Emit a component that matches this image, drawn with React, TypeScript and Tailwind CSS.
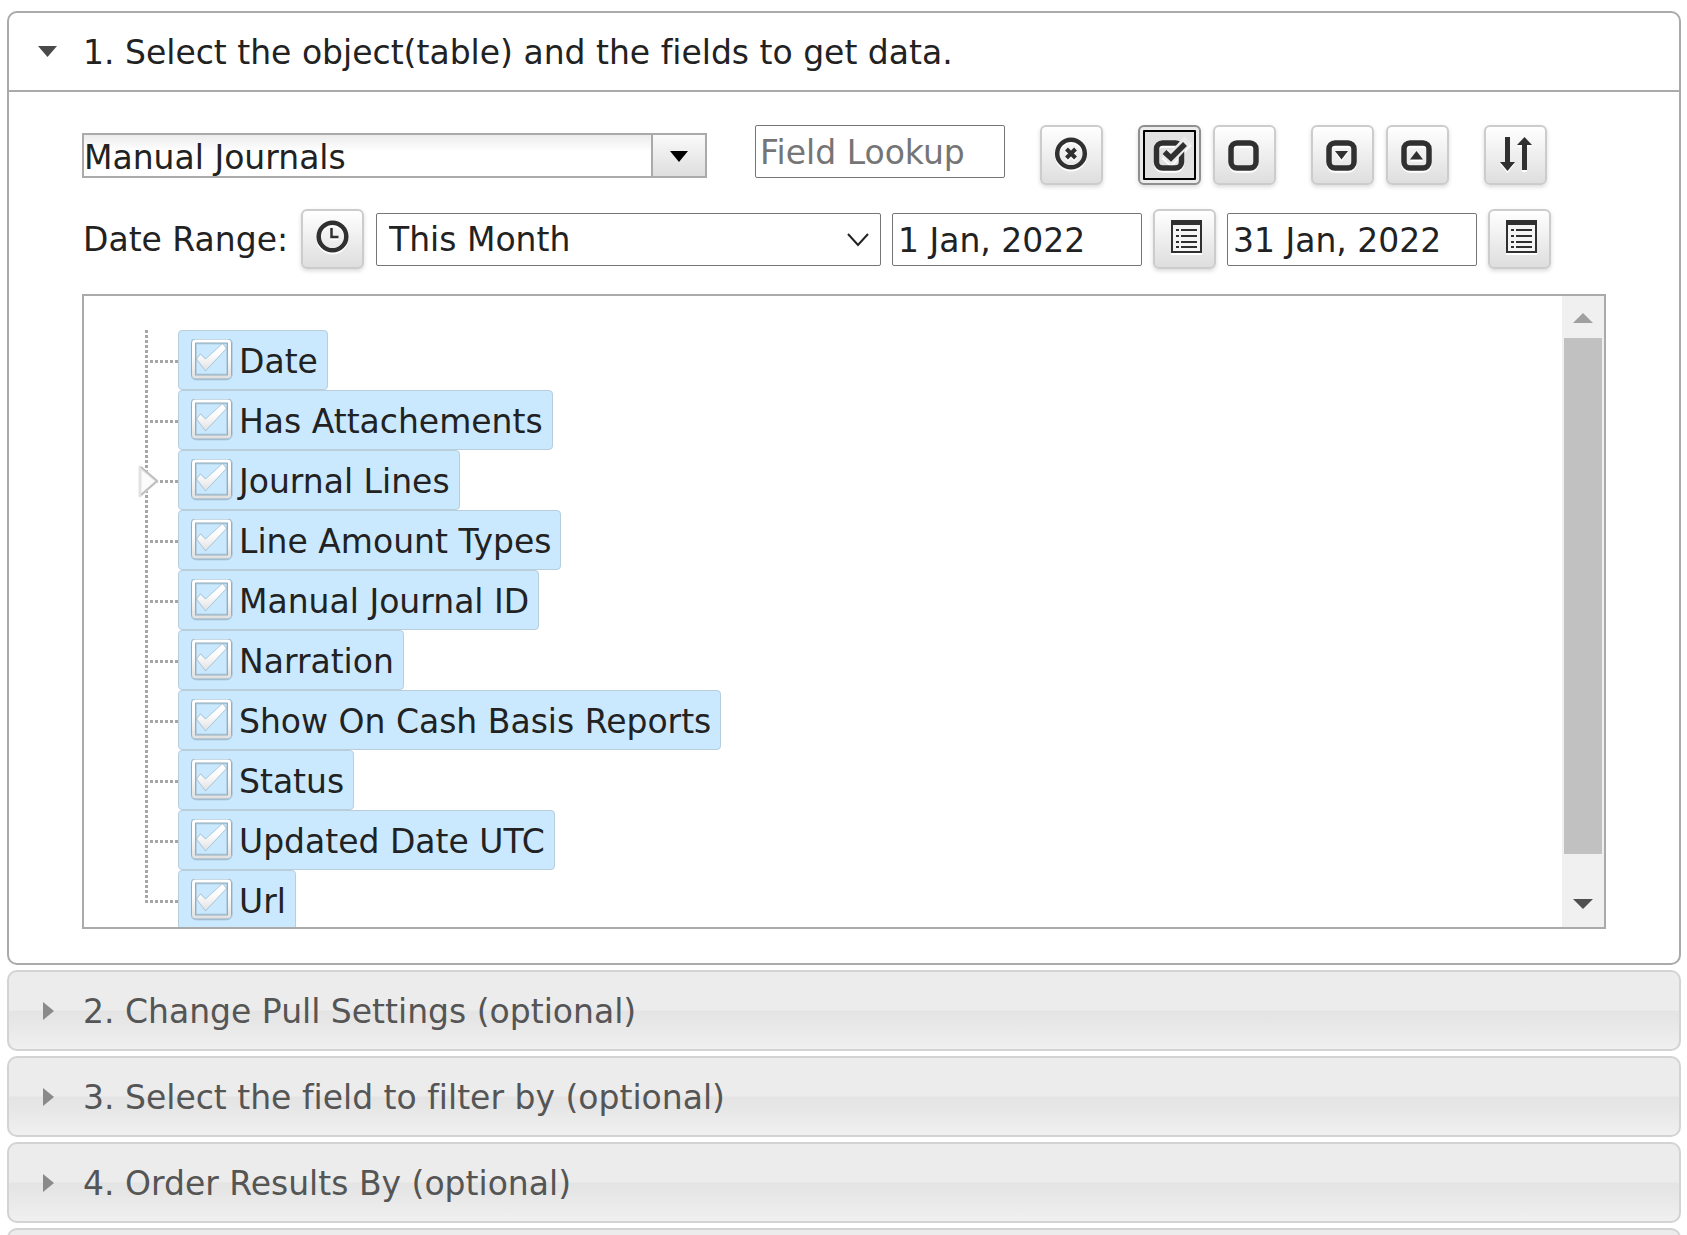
import React, { useState } from 'react';

const FIELDS = [
  { id: 'date', label: 'Date' },
  { id: 'attachments', label: 'Has Attachements' },
  { id: 'lines', label: 'Journal Lines', expandable: true },
  { id: 'amountTypes', label: 'Line Amount Types' },
  { id: 'journalId', label: 'Manual Journal ID' },
  { id: 'narration', label: 'Narration' },
  { id: 'cashBasis', label: 'Show On Cash Basis Reports' },
  { id: 'status', label: 'Status' },
  { id: 'updated', label: 'Updated Date UTC' },
  { id: 'url', label: 'Url' },
];

const STEPS = [
  '2. Change Pull Settings (optional)',
  '3. Select the field to filter by (optional)',
  '4. Order Results By (optional)',
];

type IconButtonProps = {
  label: string;
  active?: boolean;
  onClick?: () => void;
  children: React.ReactNode;
};

const IconButton: React.FC<IconButtonProps> = ({ label, active, onClick, children }) => (
  <button
    type="button"
    aria-label={label}
    onClick={onClick}
    className={
      active
        ? 'h-[60px] w-[63px] shrink-0 rounded-md border-2 border-[#8f8f8f] bg-[#e1e1e1] shadow-[inset_0_0_0_3px_#ececec,0_2px_4px_rgba(0,0,0,0.15)] outline-2 -outline-offset-[7px] outline-black'
        : 'h-[60px] w-[63px] shrink-0 rounded-md border-2 border-[#cccccc] bg-gradient-to-b from-white to-[#dedede] shadow-[0_2px_4px_rgba(0,0,0,0.15)]'
    }
  >
    <svg viewBox="0 0 59 56" className="block h-14 w-[59px] drop-shadow-[0_2px_0_white]" fill="none" stroke="#303030">
      {children}
    </svg>
  </button>
);

const ListIcon = () => (
  <>
    <rect x="16" y="9" width="31" height="33" fill="#303030" stroke="none" />
    <rect x="18" y="14" width="27" height="26" fill="#f5f5f5" stroke="none" />
    <path d="M21 19h3M21 25h3M21 31h3M21 36h3M26 19h16M26 25h16M26 31h16M26 36h16" strokeWidth="2" />
  </>
);

type FieldRowProps = {
  id: string;
  label: string;
  expandable?: boolean;
  last: boolean;
  checked: boolean;
  onToggle: () => void;
};

const FieldRow: React.FC<FieldRowProps> = ({ id, label, expandable, last, checked, onToggle }) => (
  <li className="flex h-[60px] shrink-0">
    <svg viewBox="0 0 40 60" className="h-[60px] w-10 shrink-0" fill="none">
      <path d={last ? 'M8.5 0V33' : 'M8.5 0V60'} stroke="#a6a6a6" strokeWidth="3" strokeDasharray="3 2" />
      <path d="M12 31.5H40" stroke="#a6a6a6" strokeWidth="3" strokeDasharray="3 2" />
      {expandable && (
        <>
          <path d="M2 17L19 31L2 46Z" fill="#fbfbfb" stroke="#e2e2e2" strokeWidth="3" strokeLinejoin="round" />
          <path d="M3 17L19 31L3 45" stroke="#b8b8b8" strokeWidth="1.5" />
        </>
      )}
    </svg>
    <label
      htmlFor={id}
      className="flex items-center rounded-[4px] border border-[#b9cedb] bg-[#cbe9fe] pr-[9px] pl-3"
    >
      <span className="mr-[6px] grid size-[42px] shrink-0">
        <input
          id={id}
          type="checkbox"
          checked={checked}
          onChange={onToggle}
          className="col-start-1 row-start-1 size-[42px] appearance-none"
        />
        <svg viewBox="0 0 42 42" className="pointer-events-none col-start-1 row-start-1 size-[42px]" fill="none">
          <defs>
            <linearGradient id={`${id}-tick`} x1="0" y1="0" x2="0" y2="1">
              <stop offset="0" stopColor="#ffffff" />
              <stop offset="0.4" stopColor="#fdfdfd" />
              <stop offset="1" stopColor="#e2e2e2" />
            </linearGradient>
          </defs>
          <rect x="2.5" y="2" width="36" height="36" rx="3" stroke="#7d97a8" strokeOpacity="0.3" strokeWidth="7" />
          <rect x="2.5" y="2" width="36" height="36" rx="3" stroke="#7d97a8" strokeOpacity="0.6" strokeWidth="5" />
          <rect x="2.5" y="2" width="36" height="36" rx="2" stroke={`url(#${id}-tick)`} strokeWidth="3" />
          {checked && (
            <path
              d="M6 20L14.5 31.3L35 9.5L31.5 5L14.5 20.5L9.5 15.5Z"
              fill={`url(#${id}-tick)`}
              stroke="#8fabbd"
              strokeOpacity="0.6"
              strokeWidth="1.5"
              paintOrder="stroke"
            />
          )}
        </svg>
      </span>
      <span className="pt-[3px] whitespace-nowrap">{label}</span>
    </label>
  </li>
);

const App: React.FC = () => {
  const [selected, setSelected] = useState<string[]>(FIELDS.map(f => f.id));
  const [lookup, setLookup] = useState('');

  const toggle = (id: string) => {
    setSelected(prev => (prev.includes(id) ? prev.filter(x => x !== id) : [...prev, id]));
  };

  return (
    <div className="h-screen overflow-hidden bg-white pt-[11px] pr-[6px] pl-[7px] font-['Verdana','DejaVu_Sans',sans-serif] text-[33px] leading-10 text-[#222222] [font-variant-ligatures:none]">
      <div className="flex flex-col gap-[5px]">
        <section className="rounded-[10px] border-2 border-[#aaaaaa]">
          <h3 className="border-b-2 border-[#aaaaaa]">
            <button type="button" className="flex h-[77px] w-full items-center pl-[29px] text-left">
              <svg viewBox="0 0 20 20" className="mr-[25px] size-5">
                <path d="M0 4H19L9.5 15Z" fill="#4a4a4a" />
              </svg>
              <span className="pt-[2px]">1. Select the object(table) and the fields to get data.</span>
            </button>
          </h3>

          <div className="px-[73px] pt-[33px] pb-[34px]">
            <div className="flex items-start gap-[35px]">
              <div className="flex items-end gap-12">
                <div className="relative w-[625px]">
                  <select
                    aria-label="Object"
                    className="block h-[45px] w-full appearance-none border-2 border-[#aaaaaa] bg-gradient-to-b from-[#ececec] to-white to-40% pt-[3px]"
                  >
                    <option>Manual Journals</option>
                  </select>
                  <span className="pointer-events-none absolute inset-y-[2px] right-[2px] flex w-[54px] items-center justify-center border-l-2 border-[#aaaaaa] bg-gradient-to-b from-[#fafafa] to-[#dedede]">
                    <svg viewBox="0 0 18 12" className="h-3 w-[18px]">
                      <path d="M0 1H18L9 12Z" fill="#000000" />
                    </svg>
                  </span>
                </div>
                <input
                  type="text"
                  aria-label="Field Lookup"
                  placeholder="Field Lookup"
                  value={lookup}
                  onChange={e => setLookup(e.target.value)}
                  className="h-[53px] w-[250px] rounded-[2px] border border-[#767676] px-1 pt-[2px] placeholder:text-[#757575]"
                />
              </div>

              <IconButton label="Clear lookup" onClick={() => setLookup('')}>
                <circle cx="29" cy="26.5" r="13.8" strokeWidth="4.5" />
                <path d="M24.5 22L33.5 31M33.5 22L24.5 31" strokeWidth="4" />
              </IconButton>

              <div className="flex gap-3">
                <IconButton label="Select all" active onClick={() => setSelected(FIELDS.map(f => f.id))}>
                  <rect x="16.5" y="16" width="25" height="25" rx="6" strokeWidth="5.5" />
                  <path d="M25 26L31 31.5L48 13" stroke="#ebebeb" strokeWidth="10" />
                  <path d="M24.5 25L31 31L45 17" strokeWidth="5.5" />
                </IconButton>
                <IconButton label="Unselect all" onClick={() => setSelected([])}>
                  <rect x="16" y="16" width="25" height="25" rx="6" strokeWidth="5.5" />
                </IconButton>
              </div>

              <div className="flex gap-3">
                <IconButton label="Expand all">
                  <rect x="16" y="16" width="25" height="25" rx="6" strokeWidth="5.5" />
                  <path d="M22 24H35L28.5 32.5Z" fill="#303030" stroke="none" />
                </IconButton>
                <IconButton label="Collapse all">
                  <rect x="16" y="16" width="25" height="25" rx="6" strokeWidth="5.5" />
                  <path d="M22 32.5H35L28.5 24Z" fill="#303030" stroke="none" />
                </IconButton>
              </div>

              <IconButton label="Sort">
                <path
                  d="M19 10H24V35H29L21.5 44L14 35H19ZM36 43V18H31L38.5 10L46 18H41V43Z"
                  fill="#303030"
                  stroke="none"
                />
              </IconButton>
            </div>

            <div className="mt-6 flex items-center gap-[11px]">
              <label htmlFor="range" className="w-[208px] shrink-0 pt-[2px] pl-px whitespace-nowrap">
                Date Range:
              </label>
              <IconButton label="Refresh range">
                <circle cx="29.5" cy="25.5" r="13.8" strokeWidth="4.5" />
                <path d="M28.5 17V26H35.5" strokeWidth="2.5" />
              </IconButton>
              <div className="relative ml-px w-[505px]">
                <select
                  id="range"
                  className="block h-[53px] w-full appearance-none rounded-[2px] border border-[#767676] bg-white px-3 pt-[2px]"
                >
                  <option>This Month</option>
                </select>
                <svg
                  viewBox="0 0 22 14"
                  className="pointer-events-none absolute top-5 right-3 h-[14px] w-[22px]"
                  fill="none"
                  stroke="#222222"
                  strokeWidth="2"
                >
                  <path d="M1 1L11 12L21 1" />
                </svg>
              </div>
              <input
                type="text"
                aria-label="From date"
                defaultValue="1 Jan, 2022"
                className="h-[53px] w-[250px] rounded-[2px] border border-[#767676] px-[5px] pt-[2px]"
              />
              <IconButton label="Pick from date">
                <ListIcon />
              </IconButton>
              <input
                type="text"
                aria-label="To date"
                defaultValue="31 Jan, 2022"
                className="h-[53px] w-[250px] rounded-[2px] border border-[#767676] px-[5px] pt-[2px]"
              />
              <IconButton label="Pick to date">
                <ListIcon />
              </IconButton>
            </div>

            <div className="mt-[25px] flex h-[635px] overflow-hidden border-2 border-[#aaaaaa]">
              <ul className="flex min-w-0 flex-1 flex-col pt-[34px] pl-[54px]">
                {FIELDS.map((field, i) => (
                  <FieldRow
                    key={field.id}
                    id={field.id}
                    label={field.label}
                    expandable={field.expandable}
                    last={i === FIELDS.length - 1}
                    checked={selected.includes(field.id)}
                    onToggle={() => toggle(field.id)}
                  />
                ))}
              </ul>
              {/* scrollbar */}
              <div className="flex w-[42px] flex-col items-center bg-[#f0f0f0]">
                <svg viewBox="0 0 20 42" className="h-[42px] w-5 shrink-0">
                  <path d="M0 27H20L10 17Z" fill="#a0a0a0" />
                </svg>
                <div className="h-[516px] w-[38px] bg-[#c1c1c1]" />
                <svg viewBox="0 0 20 42" className="mt-auto h-[42px] w-5 shrink-0">
                  <path d="M0 14H20L10 24Z" fill="#505050" />
                </svg>
              </div>
            </div>
          </div>
        </section>

        {STEPS.map(step => (
          <h3 key={step}>
            <button
              type="button"
              className="flex h-[81px] w-full items-center rounded-[10px] border-2 border-[#d3d3d3] bg-linear-[to_bottom,#ececec_0%,#ececec_49%,#e4e4e4_51%,#e6e6e6_62%,#f0f0f0_100%] pl-[29px] text-left text-[#555555]"
            >
              <svg viewBox="0 0 20 20" className="mr-[25px] size-5">
                <path d="M5 1V19L16 10Z" fill="#8a8a8a" />
              </svg>
              <span className="pt-[2px]">{step}</span>
            </button>
          </h3>
        ))}
        <button
          type="button"
          aria-label="More options"
          className="h-[81px] w-full rounded-[10px] border-2 border-[#d3d3d3] bg-[#ececec]"
        />
      </div>
    </div>
  );
};

export default App;
